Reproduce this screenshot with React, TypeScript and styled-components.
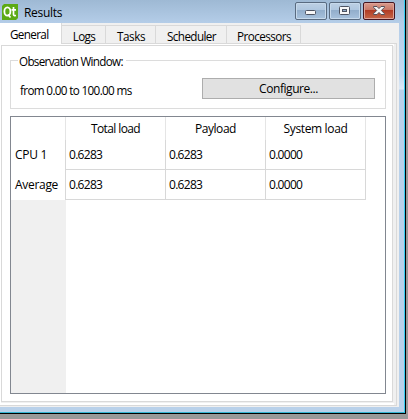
import React from "react";
import styled, { createGlobalStyle } from "styled-components";

const Global = createGlobalStyle`
  * { box-sizing: border-box; }
  body { margin: 0; overflow: hidden; background: #999; }
`;

const Desktop = styled.div`
  width: 408px;
  height: 419px;
  background: linear-gradient(#8c8c8c, #999 20%, #999);
  font: 12px/14px "Open Sans", "Noto Sans", sans-serif;
  color: #000;
  white-space: nowrap;
`;

const Frame = styled.div`
  width: 406px;
  height: 414px;
  border-right: 1px solid #000;
  border-bottom: 1px solid #000;
`;

const Glass = styled.div`
  width: 405px;
  height: 413px;
  border-right: 1px solid #35cdf2;
  border-bottom: 1px solid #35b5d4;
  background: linear-gradient(#9eb9d4 0, #b4cde8 23px, #c5daf0 75px, #dce9f7 89px, #b9d1ea 90px);
`;

const TitleBar = styled.header`
  height: 23px;
  display: flex;
  padding-left: 2px;
`;

const Logo = styled.svg`
  width: 16px;
  height: 16px;
  margin-top: 4px;
`;

const Text = styled.span<{ $ls?: number; $size?: number }>`
  display: inline-block;
  font-size: ${(p) => p.$size ?? 12}px;
  letter-spacing: ${(p) => p.$ls ?? -0.2}px;
`;

const Title = styled(Text)`
  margin: 6px 0 0 6px;
  flex: 1;
`;

const Captions = styled.div`
  display: flex;
  gap: 2px;
  padding: 2px 9px 0 0;
`;

const CaptionButton = styled.button<{ $close?: boolean }>`
  width: 32px;
  height: 18px;
  padding: 0;
  border: 1px solid ${(p) => (p.$close ? "#461620" : "#596b80")};
  border-radius: 2px;
  box-shadow: inset 0 0 0 1px ${(p) => (p.$close ? "#dda399" : "#c6d9eb")};
  background: ${(p) =>
    p.$close
      ? "linear-gradient(#d99b8d, #c77766 45%, #b13b24 46%, #c66849)"
      : "linear-gradient(#bdd0e4, #aec6df 45%, #92aecb 46%, #a8c2dd)"};
  svg { display: block; width: 30px; height: 16px; }
`;

const Client = styled.main`
  width: 399px;
  height: 384px;
  background: #f0f0f0;
`;

const Tabs = styled.nav`
  height: 20px;
  display: flex;
  align-items: flex-end;
`;

const Tab = styled.div<{ $w: number; $active?: boolean }>`
  width: ${(p) => p.$w}px;
  height: ${(p) => (p.$active ? 20 : 18)}px;
  padding: ${(p) => (p.$active ? "4px 0 0 10px" : "3px 0 0 1px")};
  text-align: ${(p) => (p.$active ? "left" : "center")};
  background: ${(p) => (p.$active ? "#fff" : "#f0f0f0")};
  border-right: 1px solid #d9d9d9;
  border-top: ${(p) => (p.$active ? "0" : "1px solid #d9d9d9")};
`;

const Outer = styled.div`
  width: 397px;
  height: 363px;
  border: solid #d9d9d9;
  border-width: 1px 1px 1px 0;
  padding: 1px 0 0 1px;
  background: linear-gradient(90deg, #fff 0 394px, #f0f0f0 394px);
`;

/* The selected tab opens straight into the page, with no rule under it. */
const TabOpening = styled.div`
  width: 61px;
  height: 1px;
  margin: -2px 0 1px -1px;
  background: #fff;
`;

const Pane = styled.section`
  width: 392px;
  height: 357px;
  border: 1px solid #d9d9d9;
  background: #fff;
  box-shadow: 0 1px #f0f0f0, 1px 1px #f0f0f0;
  padding: 14px 0 0 8px;
`;

const Group = styled.section`
  width: 376px;
  height: 49px;
  border: 1px solid #dcdcdc;
  display: flex;
  flex-direction: column;
`;

const GroupTitle = styled.div`
  align-self: flex-start;
  height: 14px;
  margin: -7px 0 0 7px;
  padding: 0 3px 0 1px;
  background: #fff;
`;

const GroupRow = styled.div`
  display: flex;
  justify-content: space-between;
  padding: 10px 10px 0 9px;
`;

const Period = styled(Text)`
  margin-top: 5px;
`;

const Configure = styled.button`
  width: 173px;
  height: 21px;
  border: 1px solid #adadad;
  background: #e1e1e1;
  font: inherit;
  color: #000;
  padding: 1px 0 0;
`;

const TableView = styled.div`
  width: 376px;
  height: 278px;
  margin-top: 7px;
  border: 1px solid #828790;
  background: linear-gradient(90deg, #f0f0f0 0 55px, #fff 55px);
`;

const Grid = styled.div`
  display: grid;
  width: 355px;
  grid-template-columns: 55px repeat(3, 100px);
  grid-template-rows: 23px 30px 30px;
`;

const Head = styled.div`
  background: #fff;
  border-right: 1px solid #e5e5e5;
  text-align: center;
  padding-top: 5px;
`;

const RowHead = styled.div`
  background: #fff;
  border-right: 1px solid #d8d8d8;
  padding: 8px 0 0 4px;
`;

const Cell = styled.div`
  background: #fff;
  border: solid #d8d8d8;
  border-width: 0 1px 1px 0;
  padding: 8px 0 0 3px;
`;

const tabs: [string, number, number][] = [
  ["General", 62, -0.65],
  ["Logs", 44, -0.65],
  ["Tasks", 50, -0.4],
  ["Scheduler", 71, -0.6],
  ["Processors", 74, -0.55],
];
const rows = [
  ["CPU 1", "0.6283", "0.6283", "0.0000"],
  ["Average", "0.6283", "0.6283", "0.0000"],
];

export default function App() {
  return (
    <Desktop>
      <Global />
      <Frame>
        <Glass>
          <TitleBar>
            <Logo viewBox="0 0 16 16">
              <path d="M2 0H16V14L14 16H0V2Z" fill="#5caa15" />
              <ellipse cx="5.4" cy="7.5" rx="3" ry="4.2" fill="none" stroke="#fff" strokeWidth="1.8" />
              <path d="M6 10.5L8.5 13.5M11.5 3V10.5Q11.5 12 14 11.5M9.5 5.8H14" fill="none" stroke="#fff" strokeWidth="1.7" />
            </Logo>
            <Title $ls={-0.3}>Results</Title>
            <Captions>
              <CaptionButton aria-label="Minimize">
                <svg viewBox="0 0 30 16">
                  <rect x="9.5" y="7.5" width="10" height="4" rx="1" fill="#f7f7f7" stroke="#4d5361" />
                </svg>
              </CaptionButton>
              <CaptionButton aria-label="Maximize">
                <svg viewBox="0 0 30 16">
                  <rect x="9.5" y="3.5" width="10" height="8" rx="1" fill="#f7f7f7" stroke="#4d5361" />
                  <rect x="12.5" y="6.5" width="4" height="2" fill="#91abc7" stroke="#4d5361" />
                </svg>
              </CaptionButton>
              <CaptionButton $close aria-label="Close">
                <svg viewBox="0 0 30 16">
                  <path d="M9.5 3.5H13L15 5.6L17 3.5H20.5V4.3L17.3 7.5L20.5 10.7V11.5H17L15 9.4L13 11.5H9.5V10.7L12.7 7.5L9.5 4.3Z" fill="#f7f7f7" stroke="#54505a" />
                </svg>
              </CaptionButton>
            </Captions>
          </TitleBar>
          <Client>
            <Tabs>
              {tabs.map(([name, w, ls], i) => (
                <Tab key={name} $w={w} $active={i === 0}>
                  <Text $ls={ls} $size={11.7}>{name}</Text>
                </Tab>
              ))}
            </Tabs>
            <Outer>
              <TabOpening />
              <Pane>
                <Group>
                  <GroupTitle><Text $ls={-0.7} $size={11.7}>Observation Window:</Text></GroupTitle>
                  <GroupRow>
                    <Period $ls={-0.65} $size={11.7}>from 0.00 to 100.00 ms</Period>
                    <Configure><Text $ls={-0.45}>Configure...</Text></Configure>
                  </GroupRow>
                </Group>
                <TableView>
                  <Grid>
                    <Head />
                    <Head><Text $ls={-0.6}>Total load</Text></Head>
                    <Head><Text $ls={-0.45}>Payload</Text></Head>
                    <Head><Text $ls={-0.35}>System load</Text></Head>
                    {rows.map(([name, ...values]) => (
                      <React.Fragment key={name}>
                        <RowHead><Text $ls={-0.3}>{name}</Text></RowHead>
                        {values.map((v, i) => (
                          <Cell key={i}><Text $ls={-0.7}>{v}</Text></Cell>
                        ))}
                      </React.Fragment>
                    ))}
                  </Grid>
                </TableView>
              </Pane>
            </Outer>
          </Client>
        </Glass>
      </Frame>
    </Desktop>
  );
}
